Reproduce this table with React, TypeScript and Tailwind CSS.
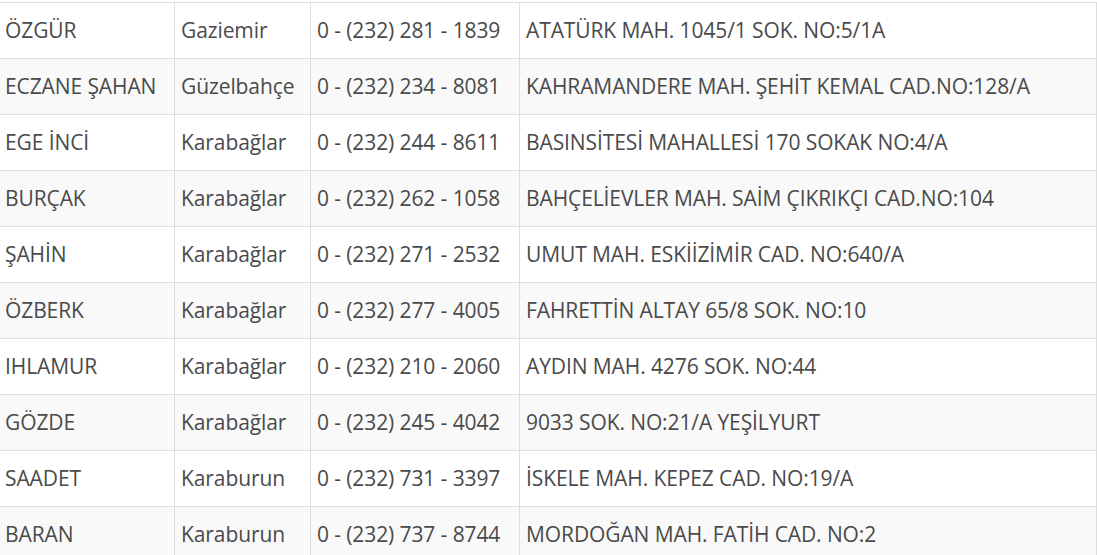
const rows = [
  ["ÖZGÜR", "Gaziemir", "0 - (232) 281 - 1839", "ATATÜRK MAH. 1045/1 SOK. NO:5/1A"],
  ["ECZANE ŞAHAN", "Güzelbahçe", "0 - (232) 234 - 8081", "KAHRAMANDERE MAH. ŞEHİT KEMAL CAD.NO:128/A"],
  ["EGE İNCİ", "Karabağlar", "0 - (232) 244 - 8611", "BASINSİTESİ MAHALLESİ 170 SOKAK NO:4/A"],
  ["BURÇAK", "Karabağlar", "0 - (232) 262 - 1058", "BAHÇELİEVLER MAH. SAİM ÇIKRIKÇI CAD.NO:104"],
  ["ŞAHİN", "Karabağlar", "0 - (232) 271 - 2532", "UMUT MAH. ESKİİZİMİR CAD. NO:640/A"],
  ["ÖZBERK", "Karabağlar", "0 - (232) 277 - 4005", "FAHRETTİN ALTAY 65/8 SOK. NO:10"],
  ["IHLAMUR", "Karabağlar", "0 - (232) 210 - 2060", "AYDIN MAH. 4276 SOK. NO:44"],
  ["GÖZDE", "Karabağlar", "0 - (232) 245 - 4042", "9033 SOK. NO:21/A YEŞİLYURT"],
  ["SAADET", "Karaburun", "0 - (232) 731 - 3397", "İSKELE MAH. KEPEZ CAD. NO:19/A"],
  ["BARAN", "Karaburun", "0 - (232) 737 - 8744", "MORDOĞAN MAH. FATİH CAD. NO:2"],
];

export default function App() {
  return (
    <div className="h-[555px] w-[1097px] overflow-hidden bg-white pt-[2px] font-['Open_Sans',sans-serif]">
      <table className="-ml-[2px] w-[1098px] table-fixed border-collapse text-[21px] tracking-[-0.1px] text-[#4a4a4a]">
        <colgroup>
          <col className="w-[176px]" />
          <col className="w-[136px]" />
          <col className="w-[209px]" />
          <col className="w-[577px]" />
        </colgroup>
        <tbody>
          {rows.map((r, i) => (
            <tr key={i} className={i % 2 === 1 ? "bg-[#f9f9f9]" : "bg-white"}>
              {r.map((c, j) => (
                <td
                  key={j}
                  className="h-[56px] whitespace-nowrap border border-[#dddddd] px-[6px] py-0 align-middle"
                >
                  {c}
                </td>
              ))}
            </tr>
          ))}
        </tbody>
      </table>
    </div>
  );
}
